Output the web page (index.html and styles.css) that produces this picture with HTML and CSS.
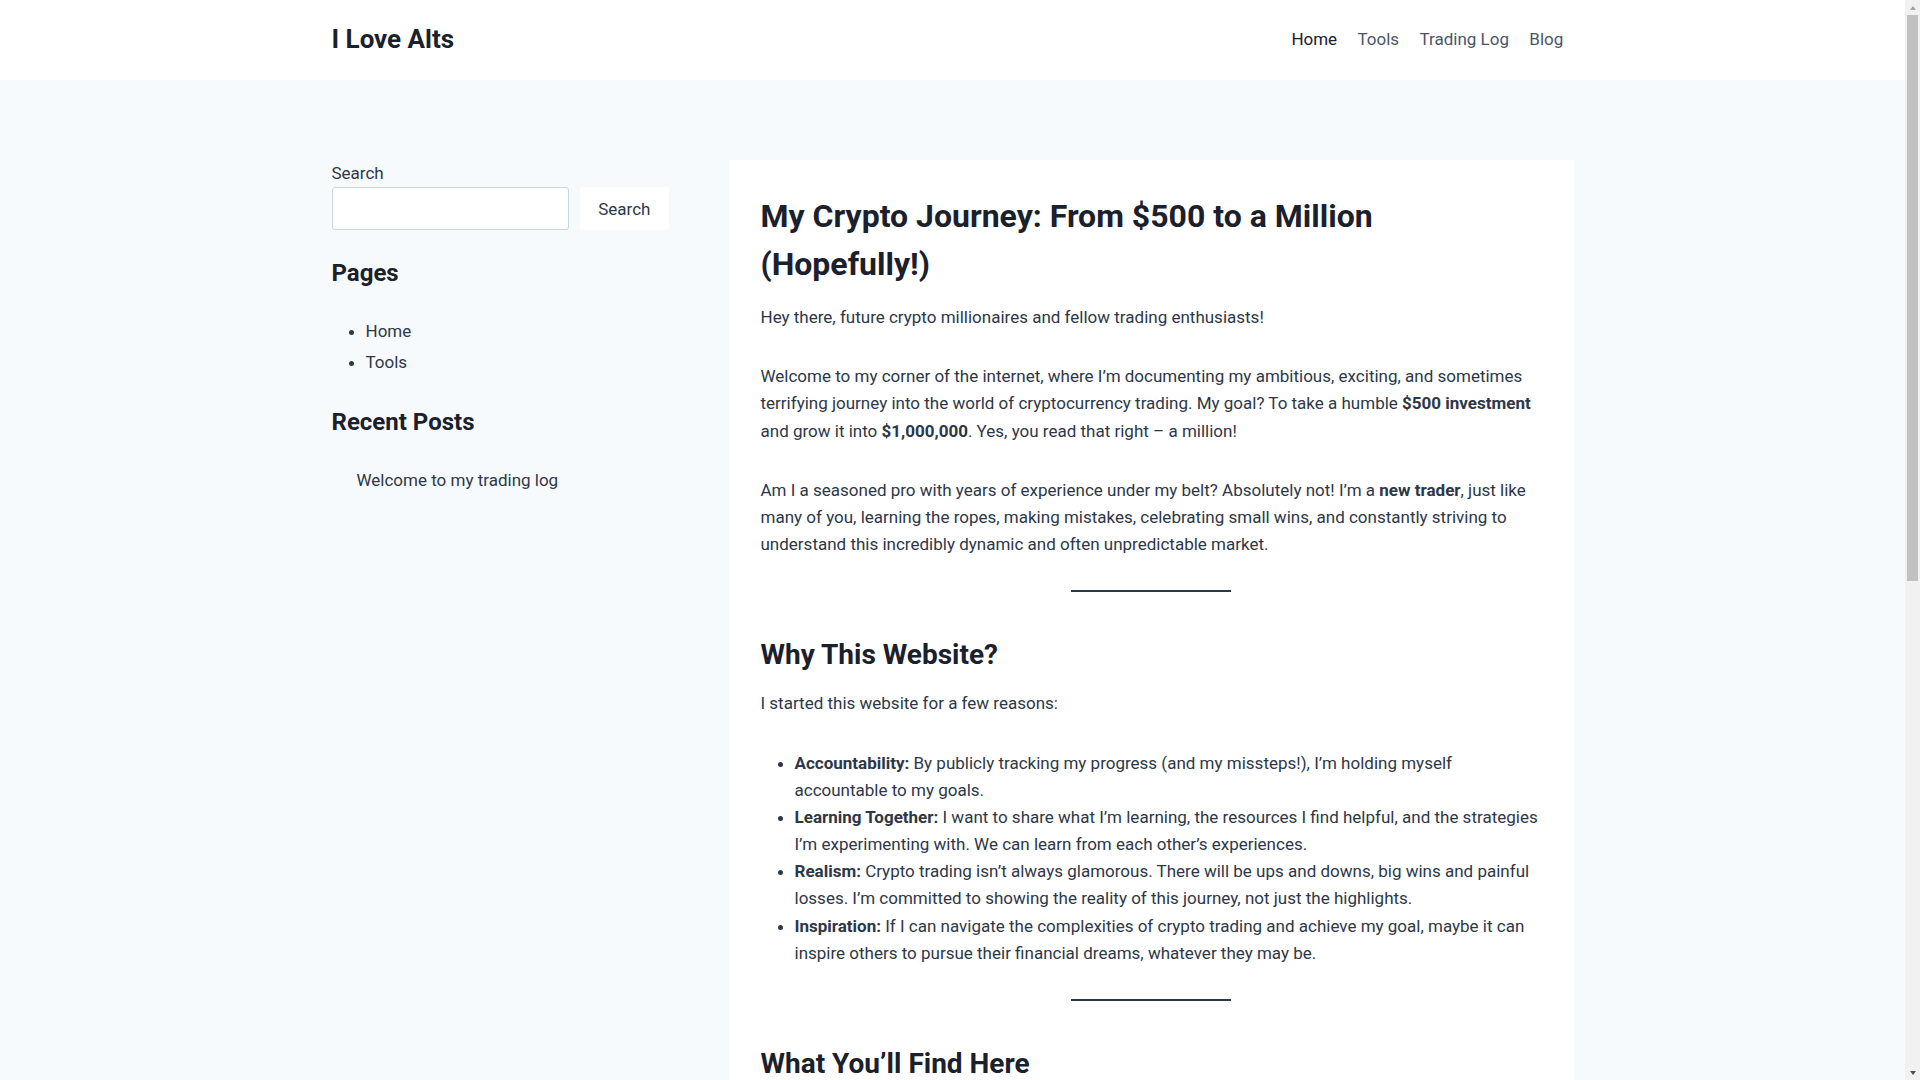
FILE: index.html
```html
<!DOCTYPE html>
<html lang="en">
<head>
<meta charset="utf-8">
<title>I Love Alts</title>
<link rel="stylesheet" href="styles.css">
</head>
<body>
<div class="page">
<header class="site-header">
  <div class="container header-inner">
    <a class="logo" href="#">I Love Alts</a>
    <nav class="main-nav">
      <ul>
        <li class="current"><a href="#">Home</a></li>
        <li><a href="#">Tools</a></li>
        <li><a href="#">Trading Log</a></li>
        <li><a href="#">Blog</a></li>
      </ul>
    </nav>
  </div>
</header>

<main class="site-main">
  <div class="container content-grid">
    <aside class="sidebar">
      <div class="widget search-widget">
        <label class="search-label" for="s">Search</label>
        <div class="search-row">
          <input class="search-input" id="s" type="text">
          <button class="search-button" type="button">Search</button>
        </div>
      </div>
      <div class="widget">
        <h2 class="widget-title">Pages</h2>
        <ul class="page-list">
          <li><a href="#">Home</a></li>
          <li><a href="#">Tools</a></li>
        </ul>
      </div>
      <div class="widget">
        <h2 class="widget-title">Recent Posts</h2>
        <ul class="recent-list">
          <li><a href="#">Welcome to my trading log</a></li>
        </ul>
      </div>
    </aside>

    <article class="card">
      <h1 class="entry-title">My Crypto Journey: From $500 to a Million (Hopefully!)</h1>
      <div class="entry-content">
        <p>Hey there, future crypto millionaires and fellow trading enthusiasts!</p>
        <p>Welcome to my corner of the internet, where I’m documenting my ambitious, exciting, and sometimes terrifying journey into the world of cryptocurrency trading. My goal? To take a humble <strong>$500 investment</strong> and grow it into <strong>$1,000,000</strong>. Yes, you read that right – a million!</p>
        <p>Am I a seasoned pro with years of experience under my belt? Absolutely not! I’m a <strong>new trader</strong>, just like many of you, learning the ropes, making mistakes, celebrating small wins, and constantly striving to understand this incredibly dynamic and often unpredictable market.</p>
        <hr class="separator">
        <h2>Why This Website?</h2>
        <p>I started this website for a few reasons:</p>
        <ul>
          <li><strong>Accountability:</strong> By publicly tracking my progress (and my missteps!), I’m holding myself accountable to my goals.</li>
          <li><strong>Learning Together:</strong> I want to share what I’m learning, the resources I find helpful, and the strategies I’m experimenting with. We can learn from each other’s experiences.</li>
          <li><strong>Realism:</strong> Crypto trading isn’t always glamorous. There will be ups and downs, big wins and painful losses. I’m committed to showing the reality of this journey, not just the highlights.</li>
          <li><strong>Inspiration:</strong> If I can navigate the complexities of crypto trading and achieve my goal, maybe it can inspire others to pursue their financial dreams, whatever they may be.</li>
        </ul>
        <hr class="separator">
        <h2>What You’ll Find Here</h2>
        <p>Here’s a taste of what you can expect as I document my progress:</p>
        <ul>
          <li><strong>Trading Log:</strong> Detailed records of my trades, including entries, exits, wins, losses, and the reasoning behind each decision.</li>
          <li><strong>Tools:</strong> The platforms, charts, and resources I use to research and execute my trades.</li>
          <li><strong>Blog Posts:</strong> Reflections, lessons learned, and updates on my progress toward the $1,000,000 goal.</li>
        </ul>
        <hr class="separator">
        <h2>Let’s Do This!</h2>
        <p>So buckle up and join me on this wild ride. Whether you’re a complete beginner or have some experience under your belt, I hope you’ll find something valuable here. Let’s learn, grow, and chase that million together!</p>
      </div>
    </article>
  </div>
</main>

<footer class="site-footer">
  <div class="container footer-inner">© 2025 I Love Alts - WordPress Theme by Kadence WP</div>
</footer>
</div>

<div class="scrollbar" aria-hidden="true">
  <div class="sb-button"><span class="sb-arrow-up"></span></div>
  <div class="sb-thumb"></div>
  <div class="sb-track"></div>
  <div class="sb-button"><span class="sb-arrow-down"></span></div>
</div>
</body>
</html>
```

FILE: styles.css
```css
* {
  box-sizing: border-box;
}

html, body {
  margin: 0;
  padding: 0;
}

body {
  font-family: Roboto, "Liberation Sans", sans-serif;
  font-size: 17px;
  line-height: 1.6;
  color: #2D3748;
  background: #F7FAFC;
}

.page {
  margin-right: 15px;
}

a {
  color: inherit;
  text-decoration: none;
}

.container {
  max-width: 1290px;
  margin: 0 auto;
  padding: 0 24px;
}

/* Header */
.site-header {
  background: #ffffff;
}

.header-inner {
  height: 80px;
  display: flex;
  align-items: center;
  justify-content: space-between;
}

.logo {
  font-size: 26px;
  font-weight: 700;
  line-height: 1.2;
  color: #1A202C;
}

.main-nav ul {
  list-style: none;
  margin: 0;
  padding: 0;
  display: flex;
}

.main-nav a {
  display: block;
  padding: 0.6em 0.6em;
  color: #4A5568;
  font-size: 17px;
  line-height: 1.6;
}

.main-nav .current a {
  color: #1A202C;
}

/* Main layout */
.site-main {
  padding: 80px 0 80px;
}

.content-grid {
  display: grid;
  grid-template-columns: 337px 1fr;
  column-gap: 60px;
  align-items: start;
}

/* Sidebar */
.widget {
  margin-bottom: 25px;
}

.search-label {
  display: block;
  color: #2D3748;
}

.search-row {
  display: flex;
  gap: 11px;
}

.search-input {
  flex: 1;
  min-width: 0;
  height: 43px;
  border: 1px solid #CBD5E0;
  border-radius: 3px;
  background: #ffffff;
  font: inherit;
  padding: 0 12px;
}

.search-button {
  height: 43px;
  border: 0;
  border-radius: 3px;
  background: #ffffff;
  color: #2D3748;
  font-family: Roboto, "Liberation Sans", sans-serif;
  font-size: 17px;
  padding: 0 18px;
}

.widget-title {
  font-size: 24px;
  line-height: 1.5;
  font-weight: 700;
  color: #1A202C;
  margin: 0 0 25px;
}

.page-list {
  margin: 0;
  padding-left: 34px;
}

.page-list li {
  padding: 2px 0;
}

.recent-list {
  list-style: none;
  margin: 0;
  padding-left: 25px;
}

.recent-list li {
  padding: 2px 0;
}

/* Card */
.card {
  background: #ffffff;
  border-radius: 3px;
  padding: 32px 32px 40px;
  box-shadow: 0 15px 15px -10px rgba(0, 0, 0, 0.05);
  min-width: 0;
}

.entry-title {
  font-size: 32px;
  line-height: 1.5;
  font-weight: 700;
  color: #1A202C;
  margin: 0 0 16px;
}

.entry-content p {
  margin: 0 0 32px;
}

.entry-content h2 {
  font-size: 28px;
  line-height: 1.5;
  font-weight: 700;
  color: #1A202C;
  margin: 42px 0 14px;
}

.entry-content ul {
  margin: 0 0 32px;
  padding-left: 34px;
}

.entry-content strong {
  font-weight: 700;
}

.separator {
  width: 160px;
  height: 0;
  border: 0;
  border-top: 2px solid #2D3748;
  margin: 32px auto;
}

.entry-content > :last-child {
  margin-bottom: 0;
}

/* Footer */
.site-footer {
  background: #ffffff;
}

.footer-inner {
  padding: 30px 24px;
  font-size: 15px;
  color: #4A5568;
}

/* Window scrollbar (drawn over the page edge) */
.scrollbar {
  position: fixed;
  top: 0;
  right: 0;
  width: 15px;
  height: 100vh;
  background: #F1F1F1;
  display: flex;
  flex-direction: column;
}

.sb-button {
  height: 15px;
  flex: none;
  display: flex;
  align-items: center;
  justify-content: center;
}

.sb-arrow-up {
  width: 0;
  height: 0;
  border-left: 3.5px solid transparent;
  border-right: 3.5px solid transparent;
  border-bottom: 4px solid #A3A3A3;
}

.sb-arrow-down {
  width: 0;
  height: 0;
  border-left: 3.5px solid transparent;
  border-right: 3.5px solid transparent;
  border-top: 4px solid #505050;
}

.sb-thumb {
  height: 566px;
  flex: none;
  margin: 0 2px;
  background: #C1C1C1;
}

.sb-track {
  flex: 1;
}
```
